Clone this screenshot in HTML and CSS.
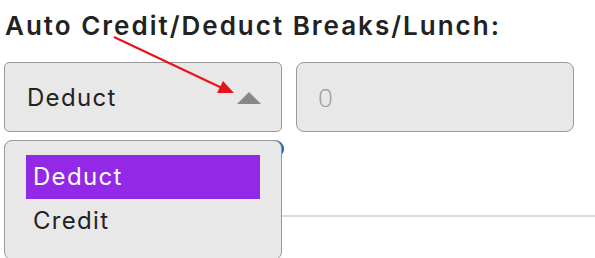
FILE: index.html
```html
<!DOCTYPE html>
<html lang="en">
<head>
    <meta charset="UTF-8">
    <meta name="viewport" content="width=device-width, initial-scale=1.0">
    <title>Auto Credit/Deduct</title>
    <link rel="stylesheet" href="styles.css">
</head>
<body>

<div class="field">
    <h2 class="field-title">Auto Credit/Deduct Breaks/Lunch:</h2>

    <div class="field-row">
        <div class="select-wrap">
            <div class="select-box">
                <span class="select-value">Deduct</span>
                <span class="caret"></span>
            </div>
            <ul class="select-menu">
                <li class="select-option active">Deduct</li>
                <li class="select-option">Credit</li>
            </ul>
        </div>
        <div class="input-box">0</div>
    </div>

    <!-- bouton caché derrière la liste -->
    <div class="hidden-btn"></div>

    <hr class="divider">
</div>

<!-- flèche d'annotation -->
<svg class="annotation" width="595" height="258" viewBox="0 0 595 258">
    <line x1="114" y1="37" x2="222" y2="88" stroke="#e8141a" stroke-width="2.2"/>
    <polygon points="234,93 217,93 223,81" fill="#e8141a"/>
</svg>

</body>
</html>
```

FILE: styles.css
```css
html, body {
    height: 258px;
}

body {
    margin: 0;
    background: #fff;
    font-family: "Inter", "Open Sans", sans-serif;
    color: #222;
    overflow: hidden;
}

.field {
    padding: 10px 0 0 4px;
    height: 248px;
}

.field-title {
    margin: 0 0 20px 1px;
    font-size: 26px;
    font-weight: 600;
    line-height: 32px;
    color: #222;
    letter-spacing: 2px;
    white-space: nowrap;
}

.field-row {
    display: flex;
    gap: 14px;
}

.select-wrap {
    position: relative;
    width: 278px;
    z-index: 2;
}

.select-box {
    box-sizing: border-box;
    height: 70px;
    display: flex;
    align-items: center;
    justify-content: space-between;
    padding: 0 20px 0 22px;
    background: #e8e8e8;
    border: 1px solid #9a9a9a;
    border-radius: 5px;
    font-size: 24px;
    letter-spacing: 1.3px;
    color: #222;
}

.caret {
    width: 0;
    height: 0;
    border-left: 12px solid transparent;
    border-right: 12px solid transparent;
    border-bottom: 12px solid #888;
    margin-top: 2px;
}

.select-menu {
    position: absolute;
    top: 78px;
    left: 0;
    width: 278px;
    box-sizing: border-box;
    margin: 0;
    padding: 14px 21px 16px 21px;
    list-style: none;
    background: #e8e8e8;
    border: 1px solid #9a9a9a;
    border-radius: 8px;
}

.select-option {
    height: 44px;
    line-height: 44px;
    padding-left: 7px;
    font-size: 24px;
    letter-spacing: 1.3px;
    color: #222;
}

.select-option.active {
    background: #9328e6;
    color: #fff;
}

.input-box {
    box-sizing: border-box;
    width: 278px;
    height: 70px;
    display: flex;
    align-items: center;
    padding-left: 21px;
    background: #e8e8e8;
    border: 1px solid #9a9a9a;
    border-radius: 8px;
    font-family: "Open Sans", sans-serif;
    font-size: 26px;
    font-weight: 300;
    color: #999;
}

.hidden-btn {
    width: 280px;
    height: 18px;
    margin-top: 8px;
    background: #1d5fb8;
    border-radius: 10px;
}

.divider {
    margin: 57px 0 0 0;
    border: 0;
    border-top: 2px solid #dddddd;
}

.annotation {
    position: absolute;
    top: 0;
    left: 0;
    z-index: 5;
    pointer-events: none;
}
```
